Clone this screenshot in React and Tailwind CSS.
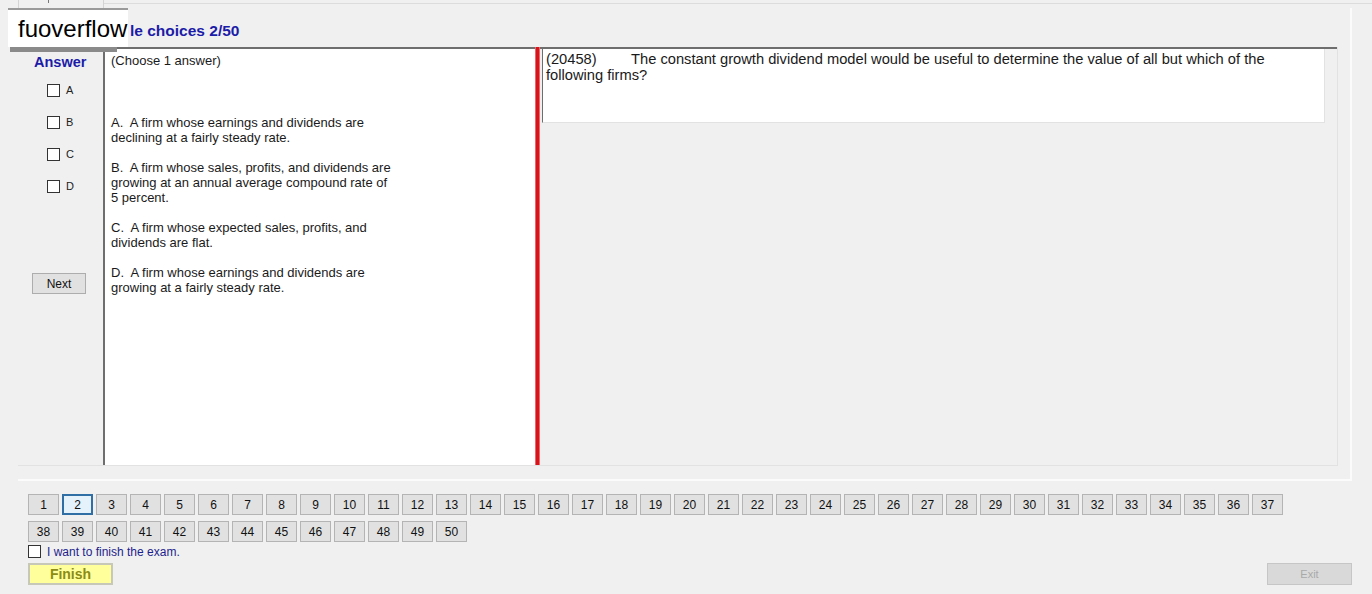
import React from 'react';

const font = { fontFamily: '"Liberation Sans", Arial, sans-serif' };

const options = [
  ['A.  A firm whose earnings and dividends are', 'declining at a fairly steady rate.'],
  ['B.  A firm whose sales, profits, and dividends are', 'growing at an annual average compound rate of', '5 percent.'],
  ['C.  A firm whose expected sales, profits, and', 'dividends are flat.'],
  ['D.  A firm whose earnings and dividends are', 'growing at a fairly steady rate.'],
];

function NumButton({ n, active }) {
  return (
    <button
      className={
        'w-[31px] h-[21px] text-[12px] leading-none text-[#111] flex items-center justify-center ' +
        (active ? 'border-2 border-[#2f6fa6] bg-[#e5f1fb]' : 'border border-[#b4b4b4] bg-[#e1e1e1]')
      }
    >
      {n}
    </button>
  );
}

export default function App() {
  const row1 = Array.from({ length: 37 }, (_, i) => i + 1);
  const row2 = Array.from({ length: 13 }, (_, i) => i + 38);

  return (
    <div className="w-[1372px] h-[594px] bg-[#f0f0f0] relative overflow-hidden flex flex-col" style={font}>
      {/* top tab strip */}
      <div className="h-[8px] flex">
        <div className="w-[18px]" />
        <div className="w-[86px] h-full border-x border-[#d4d4d4] relative">
          <div className="absolute left-[29px] top-0 w-px h-[3px] bg-[#777]" />
        </div>
        <div className="flex-1 mt-[3px] border-t border-[#dcdcdc]" />
      </div>

      {/* group box */}
      <div className="ml-[18px] w-[1334px] h-[473px] border-r-2 border-b-2 border-r-[#fbfbfb] border-b-[#fbfbfb] flex flex-col">
        {/* title (left part hidden under the watermark) */}
        <div className="h-[39px] flex items-center pl-[112px] pt-[7px]">
          <span className="text-[15.5px] font-bold text-[#1c1ca8]">le choices 2/50</span>
        </div>

        {/* content */}
        <div className="w-[1320px] h-[419px] flex border-r border-b border-[#e2e2e2]">
          {/* answer column */}
          <div className="w-[85px] flex flex-col pl-[16px] pt-[7px] bg-[#f0f0f0]">
            <div className="text-[14.5px] font-bold text-[#1c1ca8] leading-[16px]">Answer</div>
            <div className="flex flex-col gap-[19px] mt-[14px] pl-[13px]">
              {['A', 'B', 'C', 'D'].map((l) => (
                <label key={l} className="flex items-center gap-[6px] h-[13px]">
                  <span className="w-[13px] h-[13px] border border-[#333] bg-white" />
                  <span className="text-[11px] text-[#222]">{l}</span>
                </label>
              ))}
            </div>
            <button className="mt-[80px] -ml-[2px] w-[54px] h-[21px] border border-[#adadad] bg-[#e1e1e1] text-[12px] text-[#111] flex items-center justify-center">
              Next
            </button>
          </div>

          {/* options panel */}
          <div className="w-[432px] bg-white border-t-2 border-l-2 border-[#6e6e6e] pl-[6px] pt-[4px] text-[13px] leading-[15px] text-[#1a1a1a]">
            <div>(Choose 1 answer)</div>
            <div className="mt-[47px] flex flex-col gap-[15px]">
              {options.map((lines, i) => (
                <div key={i}>
                  {lines.map((t, j) => (
                    <div key={j} className="whitespace-pre">{t}</div>
                  ))}
                </div>
              ))}
            </div>
          </div>

          {/* splitter */}
          <div className="w-[5px] bg-[#d6141b] border-x border-[#e66]" />

          {/* question side */}
          <div className="flex-1 border-t-2 border-[#6e6e6e] pl-[2px] bg-[#f0f0f0]">
            <div className="w-[783px] h-[74px] bg-white border-l border-[#6e6e6e] border-r border-b border-r-[#e2e2e2] border-b-[#e2e2e2] pl-[3px] pt-[2px] text-[14.7px] leading-[16px] text-[#1a1a1a]">
              <span className="inline-block w-[85px]">(20458)</span>
              The constant growth dividend model would be useful to determine the value of all but which of the
              <br />
              following firms?
            </div>
          </div>
        </div>
      </div>

      {/* bottom area */}
      <div className="flex-1 flex flex-col pl-[28px] pr-[20px] pt-[13px]">
        <div className="flex gap-[3px]">
          {row1.map((n) => (
            <NumButton key={n} n={n} active={n === 2} />
          ))}
        </div>
        <div className="flex gap-[3px] mt-[6px]">
          {row2.map((n) => (
            <NumButton key={n} n={n} />
          ))}
        </div>
        <label className="flex items-center gap-[6px] mt-[2px] h-[15px]">
          <span className="w-[13px] h-[13px] border border-[#333] bg-white" />
          <span className="text-[12px] text-[#1e1e8c]">I want to finish the exam.</span>
        </label>
        <div className="flex justify-between mt-[4px]">
          <button className="w-[85px] h-[22px] bg-[#ffff9c] border-2 border-[#c8c8b8] text-[14px] font-bold text-[#8c8c14] flex items-center justify-center">
            Finish
          </button>
          <button className="w-[85px] h-[22px] bg-[#d9d9d9] border border-[#c6c6c6] text-[11px] text-[#a9a9a9] flex items-center justify-center">
            Exit
          </button>
        </div>
      </div>

      {/* watermark overlay */}
      <div className="absolute left-[8px] top-[8px] w-[120px] h-[44px] flex flex-col">
        <div className="h-[39px] bg-white border-t-2 border-[#9a9a9a] flex items-center pl-[10px]">
          <span className="text-[24px] leading-none text-black">fuoverflow</span>
        </div>
        <div className="h-[5px] w-[107px] ml-[2px] bg-[#8a8a8a]" />
      </div>
    </div>
  );
}
